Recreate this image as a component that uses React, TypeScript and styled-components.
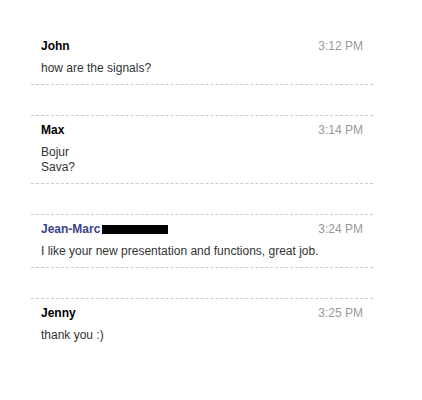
import styled, { createGlobalStyle } from 'styled-components';

const GlobalStyle = createGlobalStyle`
  body {
    margin: 0;
    background: #fff;
    font-family: "Liberation Sans", Arial, sans-serif;
  }
`;

type Message = {
  author: string;
  time: string;
  lines: string[];
  highlight?: boolean;
  redacted?: boolean;
};

const messages: Message[] = [
  { author: 'John', time: '3:12 PM', lines: ['how are the signals?'] },
  { author: 'Max', time: '3:14 PM', lines: ['Bojur', 'Sava?'] },
  {
    author: 'Jean-Marc',
    time: '3:24 PM',
    lines: ['I like your new presentation and functions, great job.'],
    highlight: true,
    redacted: true,
  },
  { author: 'Jenny', time: '3:25 PM', lines: ['thank you :)'] },
];

const App = () => {
  return (
    <>
      <GlobalStyle />
      <ListStyled>
        {messages.map((m, i) => (
          <MessageStyled key={i} $first={i === 0} $last={i === messages.length - 1}>
            <Header>
              <Author $highlight={m.highlight}>
                {m.author}
                {m.redacted && <Redacted />}
              </Author>
              <Time>{m.time}</Time>
            </Header>
            <Body>
              {m.lines.map((line, j) => (
                <div key={j}>{line}</div>
              ))}
            </Body>
          </MessageStyled>
        ))}
      </ListStyled>
    </>
  );
};

export default App;

const ListStyled = styled.div`
  display: flex;
  flex-direction: column;
  gap: 30px;
  width: 342px;
  margin-left: 31px;
  padding-top: 32px;
`;

const MessageStyled = styled.div<{ $first: boolean; $last: boolean }>`
  padding: 7px 10px 8px;
  border-top: ${(p) => (p.$first ? 'none' : '1px dashed #ccc')};
  border-bottom: ${(p) => (p.$last ? 'none' : '1px dashed #ccc')};
`;

const Header = styled.div`
  display: flex;
  justify-content: space-between;
  align-items: center;
  line-height: 15px;
  font-size: 12px;
`;

const Author = styled.span<{ $highlight?: boolean }>`
  display: flex;
  align-items: center;
  font-weight: bold;
  color: ${(p) => (p.$highlight ? '#3b4488' : '#000')};
`;

const Redacted = styled.span`
  display: inline-block;
  width: 66px;
  height: 9px;
  margin-left: 2px;
  background: #000;
`;

const Time = styled.span`
  color: #999;
`;

const Body = styled.div`
  margin-top: 7px;
  font-size: 12px;
  line-height: 15px;
  color: #333;
`;
